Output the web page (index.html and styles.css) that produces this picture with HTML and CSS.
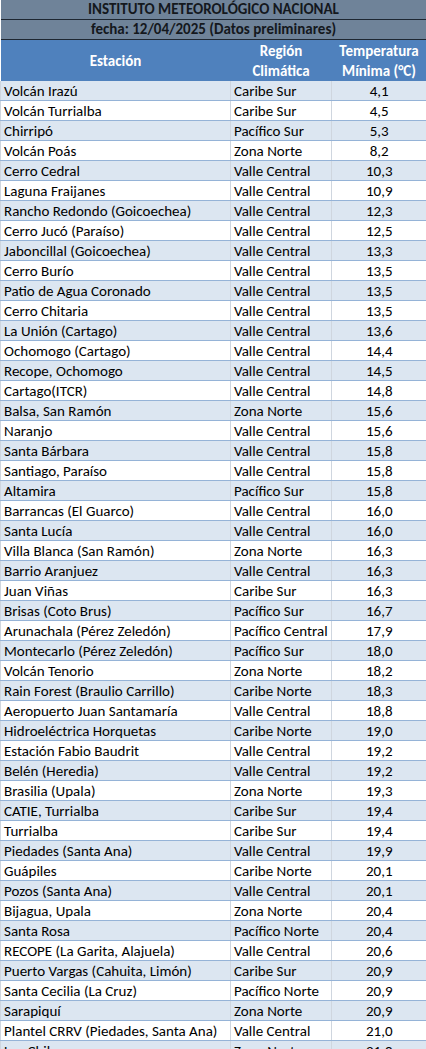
FILE: index.html
```html
<!DOCTYPE html>
<html lang="es">
<head>
<meta charset="utf-8">
<title>Temperatura mínima</title>
<link rel="stylesheet" href="styles.css">
</head>
<body>
<table class="tabla">
<colgroup><col class="c1"><col class="c2"><col class="c3"></colgroup>
<thead>
<tr class="titulo"><th colspan="3">INSTITUTO METEOROLÓGICO NACIONAL</th></tr>
<tr class="titulo fecha"><th colspan="3">fecha: 12/04/2025 (Datos preliminares)</th></tr>
<tr class="cab"><th>Estación</th><th>Región<br>Climática</th><th>Temperatura<br>Mínima (°C)</th></tr>
</thead>
<tbody>
<tr><td>Volcán Irazú</td><td>Caribe Sur</td><td>4,1</td></tr>
<tr><td>Volcán Turrialba</td><td>Caribe Sur</td><td>4,5</td></tr>
<tr><td>Chirripó</td><td>Pacífico Sur</td><td>5,3</td></tr>
<tr><td>Volcán Poás</td><td>Zona Norte</td><td>8,2</td></tr>
<tr><td>Cerro Cedral</td><td>Valle Central</td><td>10,3</td></tr>
<tr><td>Laguna Fraijanes</td><td>Valle Central</td><td>10,9</td></tr>
<tr><td>Rancho Redondo (Goicoechea)</td><td>Valle Central</td><td>12,3</td></tr>
<tr><td>Cerro Jucó (Paraíso)</td><td>Valle Central</td><td>12,5</td></tr>
<tr><td>Jaboncillal (Goicoechea)</td><td>Valle Central</td><td>13,3</td></tr>
<tr><td>Cerro Burío</td><td>Valle Central</td><td>13,5</td></tr>
<tr><td>Patio de Agua Coronado</td><td>Valle Central</td><td>13,5</td></tr>
<tr><td>Cerro Chitaria</td><td>Valle Central</td><td>13,5</td></tr>
<tr><td>La Unión (Cartago)</td><td>Valle Central</td><td>13,6</td></tr>
<tr><td>Ochomogo (Cartago)</td><td>Valle Central</td><td>14,4</td></tr>
<tr><td>Recope, Ochomogo</td><td>Valle Central</td><td>14,5</td></tr>
<tr><td>Cartago(ITCR)</td><td>Valle Central</td><td>14,8</td></tr>
<tr><td>Balsa, San Ramón</td><td>Zona Norte</td><td>15,6</td></tr>
<tr><td>Naranjo</td><td>Valle Central</td><td>15,6</td></tr>
<tr><td>Santa Bárbara</td><td>Valle Central</td><td>15,8</td></tr>
<tr><td>Santiago, Paraíso</td><td>Valle Central</td><td>15,8</td></tr>
<tr><td>Altamira</td><td>Pacífico Sur</td><td>15,8</td></tr>
<tr><td>Barrancas (El Guarco)</td><td>Valle Central</td><td>16,0</td></tr>
<tr><td>Santa Lucía</td><td>Valle Central</td><td>16,0</td></tr>
<tr><td>Villa Blanca (San Ramón)</td><td>Zona Norte</td><td>16,3</td></tr>
<tr><td>Barrio Aranjuez</td><td>Valle Central</td><td>16,3</td></tr>
<tr><td>Juan Viñas</td><td>Caribe Sur</td><td>16,3</td></tr>
<tr><td>Brisas (Coto Brus)</td><td>Pacífico Sur</td><td>16,7</td></tr>
<tr><td>Arunachala (Pérez Zeledón)</td><td>Pacífico Central</td><td>17,9</td></tr>
<tr><td>Montecarlo (Pérez Zeledón)</td><td>Pacífico Sur</td><td>18,0</td></tr>
<tr><td>Volcán Tenorio</td><td>Zona Norte</td><td>18,2</td></tr>
<tr><td>Rain Forest (Braulio Carrillo)</td><td>Caribe Norte</td><td>18,3</td></tr>
<tr><td>Aeropuerto Juan Santamaría</td><td>Valle Central</td><td>18,8</td></tr>
<tr><td>Hidroeléctrica Horquetas</td><td>Caribe Norte</td><td>19,0</td></tr>
<tr><td>Estación Fabio Baudrit</td><td>Valle Central</td><td>19,2</td></tr>
<tr><td>Belén (Heredia)</td><td>Valle Central</td><td>19,2</td></tr>
<tr><td>Brasilia (Upala)</td><td>Zona Norte</td><td>19,3</td></tr>
<tr><td>CATIE, Turrialba</td><td>Caribe Sur</td><td>19,4</td></tr>
<tr><td>Turrialba</td><td>Caribe Sur</td><td>19,4</td></tr>
<tr><td>Piedades (Santa Ana)</td><td>Valle Central</td><td>19,9</td></tr>
<tr><td>Guápiles</td><td>Caribe Norte</td><td>20,1</td></tr>
<tr><td>Pozos (Santa Ana)</td><td>Valle Central</td><td>20,1</td></tr>
<tr><td>Bijagua, Upala</td><td>Zona Norte</td><td>20,4</td></tr>
<tr><td>Santa Rosa</td><td>Pacífico Norte</td><td>20,4</td></tr>
<tr><td>RECOPE (La Garita, Alajuela)</td><td>Valle Central</td><td>20,6</td></tr>
<tr><td>Puerto Vargas (Cahuita, Limón)</td><td>Caribe Sur</td><td>20,9</td></tr>
<tr><td>Santa Cecilia (La Cruz)</td><td>Pacífico Norte</td><td>20,9</td></tr>
<tr><td>Sarapiquí</td><td>Zona Norte</td><td>20,9</td></tr>
<tr><td>Plantel CRRV (Piedades, Santa Ana)</td><td>Valle Central</td><td>21,0</td></tr>
<tr><td>Los Chiles</td><td>Zona Norte</td><td>21,0</td></tr>
</tbody>
</table>
</body>
</html>
```
FILE: styles.css
```css
html, body {
  margin: 0;
  padding: 0;
  background: #ffffff;
}
body {
  font-family: Carlito, "Lato", "Liberation Sans", sans-serif;
  font-size: 15px;
  color: #000;
}
.tabla {
  width: 426px;
  border-collapse: collapse;
  table-layout: fixed;
}
.c1 { width: 230px; }
.c2 { width: 101px; }
.c3 { width: 95px; }
.tabla th, .tabla td {
  padding: 0 3px;
  white-space: nowrap;
  overflow: hidden;
  line-height: 19px;
}
.titulo th {
  background: #6f8399;
  color: #14181d;
  font-weight: bold;
  text-align: center;
  height: 19px;
  border-bottom: 1px solid #1e2732;
}
.cab th {
  background: #4f81bd;
  color: #ffffff;
  font-weight: bold;
  text-align: center;
  height: 41px;
  line-height: 20px;
  padding: 0;
}
.tabla td {
  height: 17px;
  padding-top: 2px;
  line-height: 17px;
  border-bottom: 1px solid #95b3d7;
  border-left: 1px solid #cfd6df;
}
.tabla td:nth-child(3) { text-align: center; padding-left: 0; padding-right: 0; }
.tabla tbody tr:nth-child(odd) td { background: #dce6f1; }
.tabla tbody tr:nth-child(even) td { background: #ffffff; }
```
